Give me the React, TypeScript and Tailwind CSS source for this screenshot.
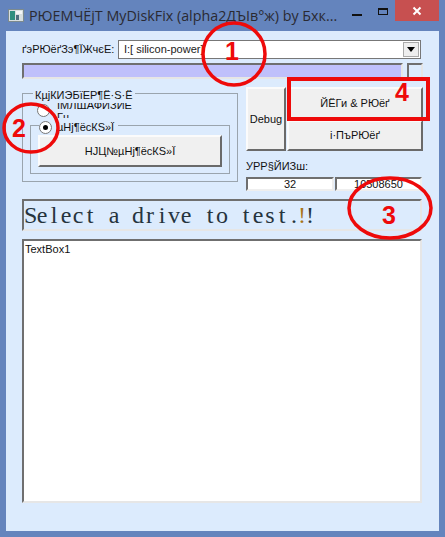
import React from 'react';

const sunken = 'border-2 border-t-[#6f6f6f] border-l-[#6f6f6f] border-r-[#e6e6e6] border-b-[#e6e6e6]';
const raised = 'bg-[#f0f0f0] border-2 border-t-[#fbfbfb] border-l-[#fbfbfb] border-r-[#6a6a6a] border-b-[#6a6a6a] flex items-center justify-center text-[11px] text-[#111]';
const numberBox = 'bg-white text-center text-[11px] leading-[11px] text-[#111] border-2 border-t-[#6f6f6f] border-l-[#6f6f6f] border-r-[#eee] border-b-[#eee]';

const Radio = ({ checked }: { checked?: boolean }) => (
  <span className="w-[13px] h-[13px] rounded-full border border-[#777] bg-white flex items-center justify-center shrink-0">
    {checked && <span className="w-[5px] h-[5px] rounded-full bg-black" />}
  </span>
);

const statusText = 'Select a drive to test.';

export default function App() {
  return (
    <div className="relative w-[445px] h-[537px] overflow-hidden bg-[#6484bd] flex flex-col font-['Liberation_Sans',sans-serif]">
      {/* Title bar */}
      <div className="h-[31px] flex items-start shrink-0">
        <svg className="ml-[8px] mt-[8px] shrink-0" width="16" height="15" viewBox="0 0 16 15">
          <rect x="0.5" y="1.5" width="15" height="12" fill="#d8dfe0" stroke="#7c8a8e" />
          <rect x="2" y="3" width="5" height="9" fill="#2f8f7f" />
          <rect x="8" y="3" width="6" height="3" fill="#f4f6f6" />
          <rect x="8" y="7" width="3" height="5" fill="#4f6f7f" />
        </svg>
        <span className="ml-[5px] mt-[7px] text-[14.3px] leading-[17px] text-[#2a2a32] whitespace-nowrap font-['Open_Sans',sans-serif]">
          РЮЕМЧЁјТ MyDiskFix (alpha2ДЪІв°ж) by Бхк...
        </span>
        <div className="ml-auto mr-[6px] flex items-start">
          <svg className="mr-[7px] mt-[7px]" width="36" height="14" viewBox="0 0 36 14">
            <rect x="0" y="7" width="10" height="2" fill="#111" />
            <rect x="26.5" y="1.5" width="9" height="6" fill="none" stroke="#111" />
            <rect x="26" y="1" width="10" height="2" fill="#111" />
          </svg>
          <div className="w-[44px] h-[21px] bg-[#c75050] flex items-center justify-center">
            <svg width="10" height="10" viewBox="0 0 10 10">
              <path d="M1.5 1.5 8.5 8.5M8.5 1.5 1.5 8.5" stroke="#fff" strokeWidth="2" />
            </svg>
          </div>
        </div>
      </div>

      {/* Client area */}
      <div className="ml-[6px] w-[433px] h-[500px] bg-[#dcebfd] pt-[9px] pl-[16px] flex flex-col shrink-0">
        <div className="h-[19px] flex items-center">
          <span className="w-[96px] text-[11px] text-[#111] whitespace-nowrap">ґэРЮёґЗэ¶ЇЖчєЕ:</span>
          <div className="w-[303px] h-[19px] bg-white border border-[#777] flex items-center justify-between pl-[5px] pr-px">
            <span className="text-[11px] text-[#222]">I:[ silicon-power]</span>
            <span className="w-[16px] h-[15px] bg-[#eee] border border-[#aaa] flex items-center justify-center">
              <svg width="8" height="5" viewBox="0 0 8 5"><path d="M0 0h8L4 5z" fill="#000" /></svg>
            </span>
          </div>
        </div>

        <div className="mt-[4px] h-[16px] flex gap-[4px]">
          <div className={`w-[381px] bg-[#bfc0fb] ${sunken}`} />
          <div className={`w-[16px] bg-[#dcebfd] ${sunken}`} />
        </div>

        <div className="mt-[8px] h-[103px] flex">
          {/* Left group */}
          <div className="relative mt-[6px] w-[216px] h-[89px] border border-[#9aa4ad] pl-[7px] pt-[31px]">
            <span className="absolute left-[10px] -top-[6px] bg-[#dcebfd] px-[2px] text-[11px] leading-[14px] text-[#111] whitespace-nowrap">КµјКИЭБїЕР¶Ё·S·Ё</span>
            <div className="absolute left-[14px] top-[10px]">
              <Radio />
            </div>
            <div className="absolute left-[34px] top-[9px] h-[6px] overflow-hidden">
              <span className="block -mt-[5px] text-[11px] leading-[14px] text-[#111] whitespace-nowrap">ІМЛЩАФИЗИЕ</span>
            </div>
            <div className="absolute left-[34px] top-[19px] h-[5px] overflow-hidden">
              <span className="block -mt-[3px] text-[11px] leading-[14px] text-[#111]">Гц</span>
            </div>
            <div className="relative w-[200px] h-[49px] border border-[#9aa4ad] pl-[7px] pt-[9px]">
              <div className="absolute left-[8px] -top-[6px] flex items-center bg-[#dcebfd] pr-[4px] h-[15px] gap-[5px]">
                <Radio checked />
                <span className="text-[11px] text-[#111] whitespace-nowrap">µНј¶ёсКЅ»Ї</span>
              </div>
              <div className={`w-[184px] h-[32px] ${raised}`}>НЈЦ№µНј¶ёсКЅ»Ї</div>
            </div>
          </div>

          {/* Right column */}
          <div className="ml-[8px] w-[177px] flex flex-col">
            <div className="flex h-[64px] shrink-0">
              <div className={`w-[40px] ${raised}`}>Debug</div>
              <div className="ml-px flex-1 flex flex-col gap-px">
                <div className={`flex-1 ${raised}`}>ЙЁГи &amp; РЮёґ</div>
                <div className={`flex-1 ${raised}`}>і·ПъРЮёґ</div>
              </div>
            </div>
            <span className="mt-[7px] h-[19px] shrink-0 text-[11px] leading-[17px] text-[#111]">УРР§ЙИЗш:</span>
            <div className="h-[14px] flex gap-px shrink-0">
              <div className={`w-[88px] ${numberBox}`}>32</div>
              <div className={`w-[87px] ${numberBox}`}>10508650</div>
            </div>
          </div>
        </div>

        {/* Status line */}
        <div className={`mt-[9px] w-[400px] h-[32px] ${sunken} flex items-center text-[24px] text-[#26343e] font-['Liberation_Serif',serif]`}>
          {statusText.split('').map((c, i) => (
            <span key={i} className="w-[12px] shrink-0 text-center">{c}</span>
          ))}
          <span className="w-[6px] -ml-[2px] shrink-0 text-center text-[#a8741a]">!</span>
          <span className="w-[12px] shrink-0 text-center">!</span>
        </div>

        <div className={`mt-[8px] w-[400px] h-[264px] bg-white pl-px text-[11px] leading-[16px] text-[#111] ${sunken}`}>TextBox1</div>
      </div>

      {/* Red annotations drawn over the screenshot */}
      <svg className="absolute left-0 top-0 pointer-events-none" width="445" height="537" viewBox="0 0 445 537">
        <g fill="none" stroke="#ee0a0a" strokeWidth="3.5">
          <ellipse cx="234" cy="54" rx="31" ry="31" />
          <ellipse cx="31" cy="128" rx="27" ry="24" />
          <ellipse cx="390" cy="208" rx="41" ry="30" />
          <rect x="289" y="79" width="139" height="40" strokeWidth="4" />
        </g>
      </svg>
      <span className="absolute left-[225px] top-[37px] text-[25px] leading-[28px] font-bold text-[#ee0a0a]">1</span>
      <span className="absolute left-[12px] top-[114px] text-[25px] leading-[28px] font-bold text-[#ee0a0a]">2</span>
      <span className="absolute left-[382px] top-[201px] text-[25px] leading-[28px] font-bold text-[#ee0a0a]">3</span>
      <span className="absolute left-[395px] top-[78px] text-[25px] leading-[28px] font-bold text-[#ee0a0a]">4</span>
    </div>
  );
}
